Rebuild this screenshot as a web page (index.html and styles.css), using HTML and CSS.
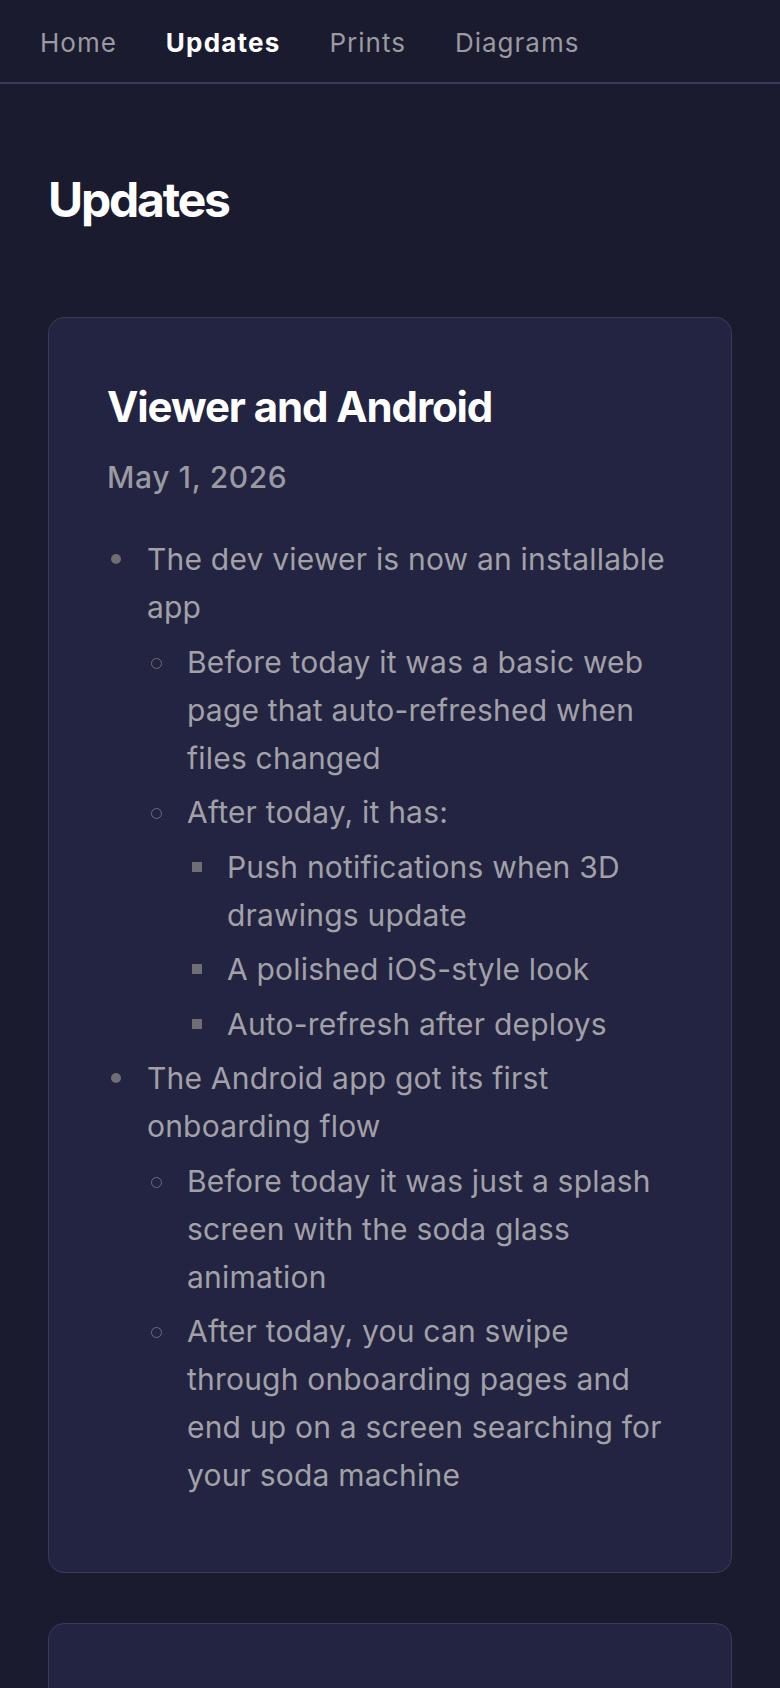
FILE: index.html
```html
<!DOCTYPE html>
<html lang="en">
<head>
<meta charset="utf-8">
<title>Updates</title>
<link rel="stylesheet" href="styles.css">
</head>
<body>
<nav class="topnav">
  <a class="navlink" href="#">Home</a>
  <a class="navlink active" href="#">Updates</a>
  <a class="navlink" href="#">Prints</a>
  <a class="navlink" href="#">Diagrams</a>
</nav>
<main class="page">
  <h1 class="page-title">Updates</h1>
  <article class="card">
    <h2 class="card-title">Viewer and Android</h2>
    <p class="card-date">May 1, 2026</p>
    <ul class="list">
      <li>The dev viewer is now an installable app
        <ul>
          <li>Before today it was a basic web page that auto-refreshed when files changed</li>
          <li>After today, it has:
            <ul>
              <li>Push notifications when 3D drawings update</li>
              <li>A polished iOS-style look</li>
              <li>Auto-refresh after deploys</li>
            </ul>
          </li>
        </ul>
      </li>
      <li>The Android app got its first onboarding flow
        <ul>
          <li>Before today it was just a splash screen with the soda glass animation</li>
          <li>After today, you can swipe through onboarding pages and end up on a screen searching for your soda machine</li>
        </ul>
      </li>
    </ul>
  </article>
  <article class="card card-next"></article>
</main>
</body>
</html>
```
FILE: styles.css
```css
html, body {
  margin: 0;
  padding: 0;
}
body {
  background: #1b1b2f;
  font-family: Inter, "Noto Sans", "Liberation Sans", sans-serif;
  color: #a1a1a6;
}
.topnav {
  display: flex;
  gap: 49px;
  padding: 23px 40px 20px;
  border-bottom: 2px solid #3a3a5c;
}
.navlink {
  font-size: 26px;
  line-height: 39px;
  letter-spacing: 1px;
  color: #9a9aa0;
  text-decoration: none;
}
.navlink.active {
  color: #ffffff;
  font-weight: 700;
  letter-spacing: 1.2px;
}
.page {
  padding: 87px 48px 0;
}
.page-title {
  margin: 0 0 88px;
  font-size: 48px;
  line-height: 1.2;
  font-weight: 700;
  letter-spacing: -2.2px;
  color: #ffffff;
}
.card {
  background: #232342;
  border: 1px solid #3a3a5c;
  border-radius: 16px;
  padding: 64px 58px 73px;
  margin-bottom: 50px;
}
.card-next {
  min-height: 120px;
  padding: 0;
}
.card-title {
  margin: 0 0 21px;
  font-size: 42px;
  line-height: 1.2;
  font-weight: 700;
  letter-spacing: -1.1px;
  color: #ffffff;
}
.card-date {
  margin: 0;
  font-size: 30px;
  line-height: 48px;
  font-weight: 500;
  letter-spacing: 0.6px;
  color: #9a9aa0;
}
.list {
  margin: 34.5px 0 0;
}
.list, .list ul {
  padding-left: 40px;
  font-size: 30px;
  line-height: 48px;
  letter-spacing: 0.2px;
  list-style: none;
}
.list ul {
  margin: 0;
}
.list li {
  margin-top: 6.5px;
}
.list li::before {
  content: "";
  display: inline-block;
  box-sizing: border-box;
  width: 10px;
  height: 10px;
  margin-left: -36.5px;
  margin-right: 26.5px;
  vertical-align: 6px;
  border-radius: 50%;
  background: #6e6e73;
}
.list ul li::before {
  width: 11px;
  height: 11px;
  margin-right: 25.5px;
  vertical-align: 4px;
  background: transparent;
  border: 1.5px solid #6e6e73;
}
.list ul ul li::before {
  width: 10px;
  height: 10px;
  margin-left: -35.5px;
  margin-right: 25.5px;
  vertical-align: 6px;
  border: 0;
  border-radius: 0;
  background: #6e6e73;
}
```
